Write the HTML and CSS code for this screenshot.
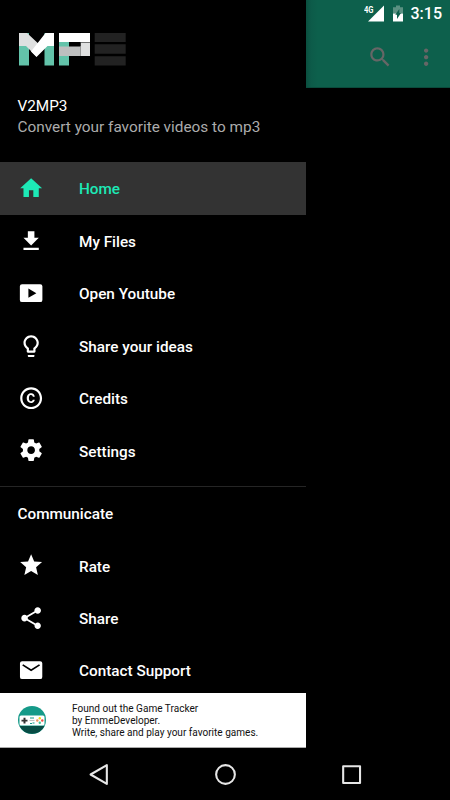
FILE: index.html
```html
<!DOCTYPE html>
<html lang="en">
<head>
<meta charset="utf-8">
<title>V2MP3</title>
<link rel="stylesheet" href="styles.css">
</head>
<body>
<div class="screen">
  <div class="main">
    <aside class="drawer">
      <header class="header">
        <svg class="logo" viewBox="0 0 108 33" width="108" height="33">
          <path fill="#63c3aa" d="M0 0h10v32.500H0zM25.500 0h9.500v32.500h-9.500zM40 9h10v23.500H40z"/>
          <path fill="#dfe0e0" d="M0 0h8L23 14 17.500 23.500 7 13H0z"/>
          <path fill="#fff" d="M26.500 0H35v13h-6.500L17.500 24 12 18.500z"/>
          <path fill="#fff" d="M40 0h31v9H40z"/>
          <path fill="#dfe0e0" d="M61.500 9.500H71V23h-9.500z"/>
          <path fill="#bebfbf" d="M40 13.500h21.500V23H40z"/>
          <path fill="#000" d="M50 10h11.500v3H50z"/>
          <path fill="#222" d="M75.700 0h31v9h-31zM75.700 11.300h31v9.500h-31zM75.700 23.200h31v9.200h-31z"/>
        </svg>
        <div class="title">V2MP3</div>
        <div class="subtitle">Convert your favorite videos to mp3</div>
      </header>
      <nav class="menu">
        <a class="item active"><svg class="icon" viewBox="0 0 24 24"><path d="M10 20v-6h4v6h5v-8h3L12 3 2 12h3v8z"/></svg><span class="label">Home</span></a>
        <a class="item"><svg class="icon" viewBox="0 0 24 24"><path d="M19 9h-4V3H9v6H5l7 7 7-7zM5 18v2h14v-2H5z"/></svg><span class="label">My Files</span></a>
        <a class="item"><svg class="icon" viewBox="0 0 24 24"><path fill-rule="evenodd" d="M3.700 3.800h16.600a2 2 0 0 1 2 2v12.400a2 2 0 0 1-2 2H3.700a2 2 0 0 1-2-2V5.800a2 2 0 0 1 2-2zM9.500 7.800v8.400l7.300-4.200z"/></svg><span class="label">Open Youtube</span></a>
        <a class="item"><svg class="icon" viewBox="0 0 24 24"><path d="M9 21c0 .55.45 1 1 1h4c.55 0 1-.45 1-1v-1H9v1zm3-19C8.140 2 5 5.140 5 9c0 2.380 1.190 4.470 3 5.740V17c0 .55.45 1 1 1h6c.55 0 1-.45 1-1v-2.260c1.810-1.270 3-3.360 3-5.740 0-3.860-3.140-7-7-7zm2.850 11.100l-.85.6V16h-4v-2.300l-.85-.6C7.800 12.160 7 10.630 7 9c0-2.760 2.240-5 5-5s5 2.240 5 5c0 1.630-.8 3.160-2.150 4.100z"/></svg><span class="label">Share your ideas</span></a>
        <a class="item"><svg class="icon" viewBox="0 0 24 24"><path d="M10.080 10.860c.05-.33.16-.62.3-.87s.34-.46.59-.62c.24-.15.54-.22.91-.23.23.01.44.05.63.13.2.09.38.21.52.36s.25.33.34.53.13.42.14.64h1.790c-.02-.47-.11-.9-.28-1.290s-.4-.73-.7-1.010-.66-.5-1.080-.66-.88-.23-1.390-.23c-.65 0-1.220.11-1.700.34s-.88.53-1.200.92-.56.84-.71 1.360S8 11.290 8 11.870v.27c0 .58.08 1.120.23 1.640s.39.97.71 1.350.72.69 1.200.91 1.050.34 1.700.34c.47 0 .91-.08 1.320-.23s.77-.36 1.080-.63.56-.58.74-.94.29-.74.3-1.150h-1.790c-.01.21-.06.4-.15.58s-.21.33-.36.46-.32.23-.52.3c-.19.07-.39.09-.6.1-.36-.01-.66-.08-.89-.23-.25-.16-.45-.37-.59-.62s-.25-.55-.3-.88-.08-.67-.08-1v-.27c0-.35.03-.68.08-1.010zM12 2C6.480 2 2 6.480 2 12s4.480 10 10 10 10-4.480 10-10S17.520 2 12 2zm0 18c-4.410 0-8-3.590-8-8s3.590-8 8-8 8 3.590 8 8-3.590 8-8 8z"/></svg><span class="label">Credits</span></a>
        <a class="item"><svg class="icon" viewBox="0 0 24 24"><path d="M19.430 12.980c.04-.32.07-.64.07-.98s-.03-.66-.07-.98l2.110-1.650c.19-.15.24-.42.12-.64l-2-3.460c-.12-.22-.39-.3-.61-.22l-2.490 1c-.52-.4-1.080-.73-1.690-.98l-.38-2.650C14.460 2.180 14.250 2 14 2h-4c-.25 0-.46.18-.49.42l-.38 2.650c-.61.25-1.170.59-1.690.98l-2.490-1c-.23-.09-.49 0-.61.22l-2 3.460c-.13.22-.07.49.12.64l2.110 1.650c-.04.32-.07.65-.07.98s.03.66.07.98l-2.110 1.650c-.19.15-.24.42-.12.64l2 3.460c.12.22.39.3.61.22l2.490-1c.52.4 1.080.73 1.690.98l.38 2.650c.03.24.24.42.49.42h4c.25 0 .46-.18.49-.42l.38-2.650c.61-.25 1.170-.59 1.690-.98l2.490 1c.23.09.49 0 .61-.22l2-3.460c.12-.22.07-.49-.12-.64l-2.110-1.650zM12 15.500c-1.930 0-3.500-1.570-3.500-3.500s1.570-3.500 3.500-3.500 3.500 1.570 3.500 3.500-1.570 3.500-3.500 3.500z"/></svg><span class="label">Settings</span></a>
      </nav>
      <section class="group">
        <h2 class="group-title">Communicate</h2>
        <a class="item"><svg class="icon" viewBox="0 0 24 24"><path d="M12 17.270L18.180 21l-1.640-7.030L22 9.240l-7.190-.61L12 2 9.190 8.630 2 9.240l5.460 4.730L5.820 21z"/></svg><span class="label">Rate</span></a>
        <a class="item"><svg class="icon" viewBox="0 0 24 24"><path d="M18 16.080c-.76 0-1.440.3-1.960.77L8.910 12.700c.05-.23.09-.46.09-.7s-.04-.47-.09-.7l7.050-4.110c.54.5 1.250.81 2.040.81 1.660 0 3-1.340 3-3s-1.340-3-3-3-3 1.340-3 3c0 .24.04.47.09.7L8.040 9.810C7.500 9.310 6.790 9 6 9c-1.660 0-3 1.340-3 3s1.340 3 3 3c.79 0 1.500-.31 2.040-.81l7.120 4.160c-.05.21-.08.43-.08.65 0 1.610 1.310 2.920 2.920 2.920s2.920-1.310 2.920-2.920-1.310-2.920-2.920-2.920z"/></svg><span class="label">Share</span></a>
        <a class="item"><svg class="icon" viewBox="0 0 24 24"><path d="M3.800 3.800h16.400a2 2 0 0 1 2 2v12.400a2 2 0 0 1-2 2H3.800a2 2 0 0 1-2-2V5.800a2 2 0 0 1 2-2z"/><path fill="none" stroke="#000" stroke-width="1.600" d="M4.300 7.200L12 12l7.700-4.800"/></svg><span class="label">Contact Support</span></a>
      </section>
      <footer class="banner">
        <svg class="badge" viewBox="0 0 28 28" width="28" height="28">
          <circle cx="14" cy="14" r="14" fill="#159a89"/>
          <path fill="#084c45" d="M1.500 20h25A14 14 0 0 1 1.500 20z"/>
          <rect x="1.500" y="9.500" width="25" height="10" rx="1.500" fill="#fff"/>
          <path fill="#333" d="M5.500 11.800h2v2h2v1.700h-2v2h-2v-2h-2v-1.700h2z"/>
          <path stroke="#159a89" stroke-width="1.200" d="M12 12h4M12 17.500h2M14.500 17h2"/>
          <path stroke="#aaa" stroke-width=".7" d="M11.500 14.500h5"/>
          <circle cx="21.800" cy="12.300" r="1.200" fill="#f4d51d"/><circle cx="19.300" cy="14.500" r="1.200" fill="#ef9360"/><circle cx="24.300" cy="14.500" r="1.200" fill="#ed4c43"/><circle cx="21.800" cy="16.800" r="1.200" fill="#42c694"/>
        </svg>
        <p class="promo">Found out the Game Tracker<br>by EmmeDeveloper.<br>Write, share and play your favorite games.</p>
      </footer>
    </aside>
    <div class="content">
      <div class="toolbar">
        <div class="status">
          <svg class="signal" width="21" height="18" viewBox="0 0 21 18"><path fill="#fff" d="M20 .5v16H4z"/><path fill="#0d604c" d="M0 0h10.500v9H0z"/><text class="network" x="0" y="8" textLength="9.500" lengthAdjust="spacingAndGlyphs">4G</text></svg>
          <svg class="battery" width="10" height="18" viewBox="0 0 10 18"><path fill="#5b9182" d="M3 .5h4v1.800h3v6.200H0V2.300h3z"/><path fill="#fff" d="M0 8.500h10v8H0z"/><path fill="#0d604c" d="M6.300 4v4h1.700L4 14V9.800H2.300z"/></svg>
          <span class="clock">3:15</span>
        </div>
        <div class="actions">
          <svg class="search" viewBox="0 0 24 24"><path d="M15.500 14h-.79l-.28-.27C15.410 12.590 16 11.110 16 9.500 16 5.910 13.090 3 9.500 3S3 5.910 3 9.500 5.910 16 9.500 16c1.610 0 3.090-.59 4.230-1.570l.27.28v.79l5 4.990L20.490 19l-4.990-5zm-6 0C7.010 14 5 11.990 5 9.500S7.010 5 9.500 5 14 7.010 14 9.500 11.990 14 9.500 14z"/></svg>
          <svg class="more" viewBox="0 0 24 24"><path d="M12 8c1.100 0 2-.9 2-2s-.9-2-2-2-2 .9-2 2 .9 2 2 2zm0 2c-1.100 0-2 .9-2 2s.9 2 2 2 2-.9 2-2-.9-2-2-2zm0 6c-1.100 0-2 .9-2 2s.9 2 2 2 2-.9 2-2-.9-2-2-2z"/></svg>
        </div>
      </div>
    </div>
  </div>
  <div class="navbar">
    <svg class="key" viewBox="0 0 24 24"><path d="M20 3v18L4.400 12z"/></svg>
    <svg class="key" viewBox="0 0 24 24"><circle cx="12" cy="12" r="9"/></svg>
    <svg class="key" viewBox="0 0 24 24"><path d="M4 4h16.200v16.200H4z"/></svg>
  </div>
</div>
</body>
</html>
```

FILE: styles.css
```css
* { box-sizing: border-box; }
body { margin: 0; background: #000; font-family: Roboto, sans-serif; }
.screen { width: 450px; height: 800px; display: flex; flex-direction: column; overflow: hidden; }
.main { height: 748px; display: flex; }
.drawer { width: 306.300px; height: 748px; display: flex; flex-direction: column; overflow: hidden; color: #fff; }
.header { height: 162.200px; flex: none; padding: 33px 0 0 17.500px; }
.logo { display: block; margin-left: 1.500px; }
.title, .subtitle { font-size: 15.300px; line-height: 21px; }
.title { margin-top: 29.500px; }
.subtitle { color: #acacac; font-size: 15.370px; }
.menu { flex: none; padding-bottom: 9px; }
.item { height: 52.450px; display: flex; align-items: center; gap: 35.250px; padding-left: 17.500px; font-size: 15.300px; font-weight: 500; }
.label { line-height: 20px; padding-top: 2px; }
.active { background: #333; color: #1de9b6; }
.icon { width: 26.250px; height: 26.250px; flex: none; fill: currentColor; }
.group { border-top: 1px solid #252525; flex: 1; min-height: 0; overflow: hidden; }
.group-title { margin: 0; height: 52.500px; padding: 1px 0 0 17.500px; font-size: 15.300px; font-weight: 500; line-height: 53px; }
.banner { height: 55.500px; flex: none; display: flex; align-items: center; background: #fff; color: #111; padding-left: 17.500px; gap: 26.500px; border-bottom: 1px solid #aaa; }
.badge { flex: none; }
.promo { margin: 2px 0 0; font-size: 10.050px; line-height: 12px; white-space: nowrap; }
.content { flex: 1; }
.toolbar { height: 88px; background: linear-gradient(90deg, #0b4f3f 0, #0d5b49 5px, #0d604c 12px); border-bottom: 1px solid #0a4b3c; }
.status { height: 27px; display: flex; align-items: center; justify-content: flex-end; padding-right: 8px; }
.signal { margin-right: 8px; }
.battery { margin-right: 7.500px; }
.network { font-size: 9px; font-weight: 700; fill: #fff; }
.clock { font-size: 16px; font-weight: 500; line-height: 27px; color: #fff; }
.actions { height: 60px; display: flex; align-items: center; justify-content: flex-end; gap: 20px; padding-right: 11px; fill: #666; }
.search, .more { width: 26.250px; height: 26.250px; }
.navbar { height: 52px; display: flex; align-items: center; justify-content: center; gap: 101.500px; }
.key { width: 25px; height: 25px; fill: none; stroke: #e6e6e6; stroke-width: 2; stroke-linejoin: round; }
```
